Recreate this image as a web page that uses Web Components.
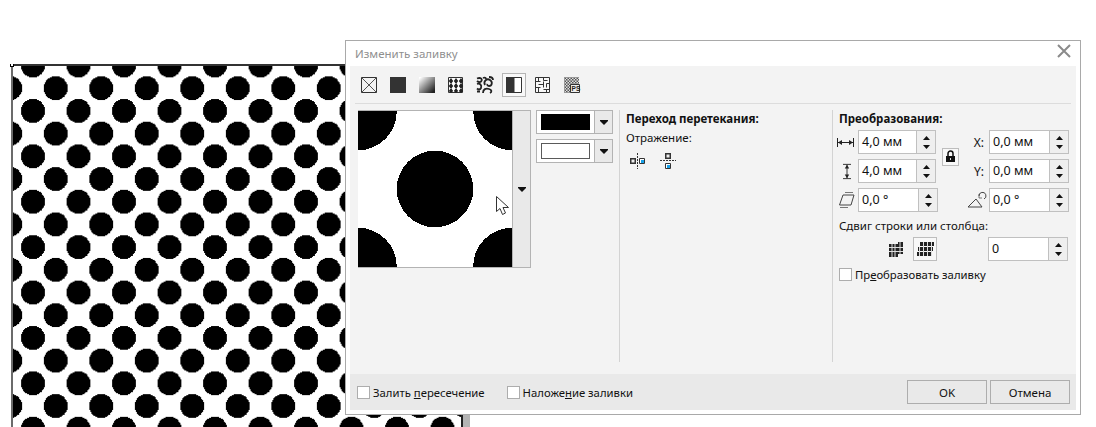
<!DOCTYPE html>
<html><head><meta charset="utf-8">
<style>
html,body{margin:0;padding:0;background:#fff;width:1096px;height:427px;overflow:hidden;font-family:"Noto Sans","Open Sans",sans-serif}
</style></head><body>
<design-canvas></design-canvas>
<fill-dialog></fill-dialog>
<template id="t-dialog">
<style>
:host{position:absolute;left:345px;top:40px;width:736px;height:375px;box-sizing:border-box;border:1px solid #a9a9a9;background:#fff;display:flex;flex-direction:column;padding:0 4px 4px;font:12px "Noto Sans","Open Sans",sans-serif;color:#111}
.title{height:25px;flex:none;display:flex;align-items:center;justify-content:space-between;color:#8f8f8f;padding:0 5px 0 5px;font-size:11.5px}
.close{width:14px;height:14px;margin:-5px 0 0 0}
.body{flex:1;background:#f3f3f3;display:flex;flex-direction:column;min-height:0}
.tools{flex:none;height:30px;margin:0 5px;border-bottom:1px solid #dcdcdc;display:flex;align-items:flex-start;padding:7px 0 0 2px;box-sizing:content-box}
.main{flex:1;display:flex;padding:6px 0 12px 8px;min-height:0}
.c1{width:255px;flex:none;display:flex;gap:5px;align-items:flex-start}
.swatches{display:flex;flex-direction:column;gap:5px}
.c2{width:213px;flex:none;box-sizing:border-box;border-left:1px solid #d3d3d3;margin-left:6px;padding:0 0 0 6px}
.c3{flex:1;border-left:1px solid #d3d3d3;padding:0 0 0 6px}
h3{margin:1px 0 4px;font-size:11.5px;line-height:15px;font-weight:700;color:#111}
.t{line-height:15px;font-size:11.5px;display:block}
.mirror{display:flex;gap:12px;margin-top:7px;padding-left:3px}
.grid{display:grid;grid-template-columns:19px 80px 21px 30px 80px;grid-template-rows:repeat(3,24px);gap:5px 0;align-items:center;margin-top:0}
.lock{grid-column:3;grid-row:1 / span 2;justify-self:end;width:17px;height:18px;box-sizing:border-box;border:1px solid #bdbdbd;background:#f8f8f8;display:flex;align-items:center;justify-content:center}
.lab{font-size:12px;text-align:right;padding-right:5px}
.shift{margin:6px 0 4px;font-size:11.5px;line-height:15px}
.sr{display:flex;height:24px;align-items:center}
.b2{width:24px;height:24px;box-sizing:border-box;border:1px solid #bdbdbd;background:#f8f8f8;display:flex;align-items:center;justify-content:center}
.bot{flex:none;height:36px;background:#e9e9e9;display:flex;align-items:center;padding:0 6px 0 7px}
.bot check-box:nth-child(2){margin-left:22px}
.sp{flex:1}
.btns{display:flex;gap:3px}
u{text-underline-offset:1px}
</style>
<div class="title"><span>Изменить заливку</span>
<svg class="close" viewBox="0 0 14 14"><path d="M1 1 13 13M13 1 1 13" stroke="#8a8a8a" stroke-width="2" fill="none"/></svg></div>
<div class="body">
<div class="tools">
<fill-icon name="none"></fill-icon><fill-icon name="solid"></fill-icon><fill-icon name="grad"></fill-icon><fill-icon name="vector"></fill-icon><fill-icon name="bitmap"></fill-icon><fill-icon name="two" active></fill-icon><fill-icon name="tex"></fill-icon><fill-icon name="ps"></fill-icon>
</div>
<div class="main">
<div class="c1"><pattern-preview></pattern-preview>
<div class="swatches"><color-pick color="#000" edge="#000"></color-pick><color-pick color="#fff" edge="#5a5a5a"></color-pick></div></div>
<div class="c2"><h3>Переход перетекания:</h3><span class="t">Отражение:</span>
<div class="mirror"><mirror-icon></mirror-icon><mirror-icon vertical></mirror-icon></div></div>
<div class="c3"><h3>Преобразования:</h3>
<div class="grid">
<svg style="margin-left:-2px" width="17" height="9" viewBox="0 0 17 9"><path d="M.5 0v9M16.5 0v9M1 4.500h15" stroke="#222" fill="none"/><path d="M1 4.500 5 2v5zM16 4.500 12 2v5z" fill="#222"/></svg>
<spin-box value="4,0 мм"></spin-box>
<span class="lock"><svg width="11" height="13" viewBox="0 0 11 13"><path d="M3 6V3.500a2.500 2.500 0 0 1 5 0V6" fill="none" stroke="#111" stroke-width="1.500"/><path d="M1 6h9v6H1z" fill="#111"/><path d="M5 8h1v2H5z" fill="#ddd"/></svg></span>
<span class="lab">X:</span><spin-box value="0,0 мм" wide></spin-box>
<svg style="margin-left:4px" width="8" height="17" viewBox="0 0 9 17"><path d="M0 .5h9M0 16.500h9M4.500 1v15" stroke="#222" fill="none"/><path d="M4.500 1 2 5h5zM4.500 16 2 12h5z" fill="#222"/></svg>
<spin-box value="4,0 мм"></spin-box>
<span class="lab" style="grid-column:4">Y:</span><spin-box value="0,0 мм" wide></spin-box>
<svg style="margin-left:-1px" width="17" height="18" viewBox="0 0 17 18"><path d="M5 4h11l-3 10H1.500z" fill="none" stroke="#444"/><path d="M7 1.500h8M2 16.500h8" stroke="#777" fill="none"/></svg>
<spin-box value="0,0 °" wide></spin-box>
<span style="grid-column:4;justify-self:end;display:flex"><svg width="22" height="18" viewBox="0 0 22 18"><path d="M1 16h14L9 8z" fill="none" stroke="#444"/><path d="M12 5a3.500 3.500 0 1 1 5 3" fill="none" stroke="#444"/><path d="M12 3v4h3" fill="none" stroke="#444" stroke-width=".7"/></svg></span>
<spin-box value="0,0 °" wide></spin-box>
</div>
<div class="shift">Сдвиг строки или столбца:</div>
<div class="sr"><span style="width:50px"></span>
<svg width="14" height="15" viewBox="0 0 14 15"><path fill="#222" d="M0 2h9v13H0zM9 0h5v12H9z"/><path stroke="#ddd" d="M3 2v13M6 2v13M11 0v12M0 5.500h14M0 9.500h14" fill="none"/></svg>
<span style="width:10px"></span>
<span class="b2"><svg width="17" height="14" viewBox="0 0 17 14"><path fill="#222" d="M3 0h14v4H3zM1 5h15v4H1zM0 10h14v4H0z"/><path stroke="#ddd" d="M6.500 0v14M10.500 0v14M14.500 0v14M2.500 5v9" fill="none"/></svg></span>
<span style="width:51px"></span><spin-box value="0" wide></spin-box></div>
<check-box style="margin-top:6px;margin-left:0">Пр<u>е</u>образовать заливку</check-box>
</div>
</div>
<div class="bot"><check-box>Залить <u>п</u>ересечение</check-box><check-box>Наложе<u>н</u>ие заливки</check-box><span class="sp"></span>
<div class="btns"><push-button>OK</push-button><push-button>Отмена</push-button></div></div>
</div>
</template>
<script>
function tpl(css,html){return `<style>${css}</style>${html}`}
class DesignCanvas extends HTMLElement{constructor(){super();const s=this.attachShadow({mode:'open'});
s.innerHTML=tpl(`:host{position:absolute;left:10px;top:64px;width:460px;height:363px;display:block}
svg{display:block;shape-rendering:crispEdges}`,
`<svg width="460" height="363" viewBox="0 0 460 363">
<defs><pattern id="p" x="23" y="1.500" width="45.500" height="45.400" patternUnits="userSpaceOnUse">
<circle cx="0" cy="0" r="12" fill="#000"/><circle cx="45.500" cy="0" r="12" fill="#000"/><circle cx="0" cy="45.400" r="12" fill="#000"/><circle cx="45.500" cy="45.400" r="12" fill="#000"/><circle cx="22.750" cy="22.700" r="12" fill="#000"/></pattern></defs>
<rect x="2" y="1" width="450" height="362" fill="#fff"/><rect x="2" y="1" width="450" height="362" fill="url(#p)"/>
<path d="M1.500 0V363" stroke="#6b6b6b" stroke-width="2" fill="none"/><path d="M1 1H452" stroke="#333" stroke-width="2"/>
<path d="M451.500 1V363" stroke="#222" stroke-width="2"/><path d="M453 8h8v355h-8z" fill="#b4b4b4"/>
<rect x="0.500" y="-0.500" width="3" height="3" fill="#fff" stroke="#000"/></svg>`)}}
customElements.define('design-canvas',DesignCanvas);
class FillDialog extends HTMLElement{constructor(){super();this.attachShadow({mode:'open'}).appendChild(document.getElementById('t-dialog').content.cloneNode(true))}}
customElements.define('fill-dialog',FillDialog);
const maze='M1.500 1.500h14v15h-14zM4.500 1.500v4M1.500 5.500h5M9.500 1.500v3h4M4.500 8.500h5M9.500 5.500v6M1.500 11.500h5M4.500 11.500v5M12.500 7.500h3M12.500 7.500v4M9.500 13.500h6M12.500 13.500v3';
const ICONS={
none:'<path d="M1.500 1.500h15v15h-15z" fill="#f3f3f3" stroke="#333"/><path d="M1.500 1.500l15 15M16.500 1.500l-15 15" stroke="#555" fill="none"/>',
solid:'<path d="M1 1h16v16H1z" fill="#333"/>',
grad:'<defs><linearGradient id="g" x1="0" y1="0" x2="1" y2="1"><stop offset=".05" stop-color="#fff"/><stop offset=".9" stop-color="#222"/></linearGradient></defs><path d="M1 1h16v16H1z" fill="url(#g)"/>',
vector:'<path d="M1.500 1.500h14v15h-14z" fill="#fff" stroke="#333"/><g fill="#222"><path d="M4 2 6.200 5 4 8 1.800 5zM9 2 11.200 5 9 8 6.800 5zM14 2 16.200 5 14 8 11.800 5zM4 7 6.200 10 4 13 1.800 10zM9 7 11.200 10 9 13 6.800 10zM14 7 16.200 10 14 13 11.800 10zM4 12 6.200 15 4 17 1.800 15zM9 12 11.200 15 9 17 6.800 15zM14 12 16.200 15 14 17 11.800 15z"/></g>',
bitmap:'<path d="M1 1h16v16H1z" fill="#f3f3f3"/><g fill="none" stroke="#222" stroke-width="1.800"><path d="M1 2.500c4-1.500 6 1 4 3-1 1-3 .5-4-.5M9 9c-2-4 2-7 5-5s2 6-1 6c-1.500 0-2-1-1.500-2"/><path d="M1 8c3-1 5 1 4 4-1 2-3 1.500-4 .5M7 17c0-4 3-5 6-4s3 3 1 4M1 15.500h3"/><path d="M13 1c2 0 4 1 4 3M7 2c2-1 3 0 3 1"/></g>',
two:'<path d="M1 1h8v16H1z" fill="#333"/><path d="M9 1.500h7.500v15H9z" fill="#fff" stroke="#333"/>',
tex:'<path d="M1 1h15v16H1z" fill="#f8f8f8"/><path d="'+maze+'" fill="none" stroke="#333"/>',
ps:'<defs><pattern id="n" width="3" height="3" patternUnits="userSpaceOnUse"><path d="M0 0h3v3H0z" fill="#ddd"/><path d="M0 0h1.500v1.500H0zM1.500 1.500H3V3H1.500z" fill="#555"/></pattern></defs><path d="M1 1h15v16H1z" fill="url(#n)"/><path d="M7.500 8.500h9v8h-9z" fill="#eee" stroke="#333"/><text x="8.600" y="15.200" font-size="6.500" font-weight="700" font-family="Liberation Sans" fill="#222">PS</text>'};
class FillIcon extends HTMLElement{constructor(){super();this.attachShadow({mode:'open'})}
connectedCallback(){const a=this.hasAttribute('active');
this.shadowRoot.innerHTML=tpl(`:host{display:flex;flex:none;width:24px;height:24px;margin-right:5px;box-sizing:border-box;align-items:center;justify-content:center;${a?'border:1px solid #b5b5b5;background:#f8f8f8':''}}svg{display:block}`,`<svg width="18" height="18" viewBox="0 0 18 18">${ICONS[this.getAttribute('name')]}</svg>`)}}
customElements.define('fill-icon',FillIcon);
const ARW=`<svg width="8" height="5" viewBox="0 0 8 5"><path d="M0 0h8v1L4 5 0 1z" fill="#111"/></svg>`;
class PatternPreview extends HTMLElement{constructor(){super();this.attachShadow({mode:'open'}).innerHTML=tpl(`:host{display:flex;width:173px;height:158px;box-sizing:border-box;border:1px solid #b3b3b3;border-left:0;background:#fff;position:relative;flex:none}
.img{flex:1;display:block;shape-rendering:crispEdges}
.s{width:18px;flex:none;background:#e9e9e9;border-left:1px solid #b3b3b3;display:flex;align-items:center;justify-content:center;box-sizing:border-box}
.cur{position:absolute;left:138px;top:85px}`,
`<svg class="img" width="155" height="156" viewBox="0 0 155 156"><rect width="155" height="156" fill="#fff"/><g fill="#000"><circle cx="77.500" cy="78" r="38.500"/><circle cx="0" cy="0" r="39"/><circle cx="155" cy="0" r="39"/><circle cx="0" cy="156" r="39"/><circle cx="155" cy="156" r="39"/></g></svg><span class="s">${ARW}</span>
<svg class="cur" width="14" height="21" viewBox="0 0 14 21"><path d="M.5.500V15.500L4 12.500l2.500 6 3-1.500L7 11.500h5.500z" fill="#fff" stroke="#333" stroke-width="1"/></svg>`)}}
customElements.define('pattern-preview',PatternPreview);
class ColorPick extends HTMLElement{constructor(){super();this.attachShadow({mode:'open'})}
connectedCallback(){const c=this.getAttribute('color'),e=this.getAttribute('edge');
this.shadowRoot.innerHTML=tpl(`:host{display:flex;width:77px;height:24px;box-sizing:border-box;border:1px solid #b3b3b3;background:#fff;flex:none}
.a{flex:1;display:flex;padding:3px 4px}.w{flex:1;background:${c};border:1px solid ${e}}
.b{width:18px;flex:none;box-sizing:border-box;background:#e9e9e9;border-left:1px solid #b3b3b3;display:flex;align-items:center;justify-content:center}`,`<div class="a"><div class="w"></div></div><div class="b">${ARW}</div>`)}}
customElements.define('color-pick',ColorPick);
class MirrorIcon extends HTMLElement{constructor(){super();this.attachShadow({mode:'open'})}
connectedCallback(){const v=this.hasAttribute('vertical');
const cell=(x,y,c,d)=>`<rect x="${x}" y="${y}" width="6" height="6" fill="${c}"/><rect x="${x+1.5}" y="${y+1.5}" width="3" height="3" fill="${d}"/>`;
const body=v?`<path d="M1 8.500h16" stroke="#333" stroke-dasharray="2 1" fill="none"/>${cell(6,1,'#333','#eee')}<path d="M6.500 11.500h5v5h-5z" fill="#fff" stroke="#333"/><rect x="8" y="13" width="3" height="3" fill="#18a0e6"/>`
:`<path d="M8.500 1v16" stroke="#333" stroke-dasharray="2 1" fill="none"/>${cell(1,6,'#333','#eee')}<path d="M10.500 6.500h5v5h-5z" fill="#fff" stroke="#333"/><rect x="12" y="8" width="3" height="3" fill="#18a0e6"/>`;
this.shadowRoot.innerHTML=tpl(`:host{display:block;width:18px;height:18px;flex:none}svg{display:block}`,`<svg width="18" height="18" viewBox="0 0 18 18">${body}</svg>`)}}
customElements.define('mirror-icon',MirrorIcon);
class SpinBox extends HTMLElement{constructor(){super();this.attachShadow({mode:'open'})}
connectedCallback(){const w=this.hasAttribute('wide');
this.shadowRoot.innerHTML=tpl(`:host{display:flex;width:${w?80:78}px;height:24px;box-sizing:border-box;border:1px solid #c0c0c0;background:#fff;font:12.5px "Noto Sans","Open Sans",sans-serif;color:#111;flex:none}
.v{flex:1;padding-left:3px;line-height:21px}
.b{width:19px;flex:none;box-sizing:border-box;background:#efefef;border-left:1px solid #c0c0c0;display:flex;flex-direction:column;align-items:center;justify-content:space-between;padding:5px 0 4px}`,
`<span class="v">${this.getAttribute('value')}</span><span class="b"><svg width="7" height="4" viewBox="0 0 7 4"><path d="M3.500 0 7 4H0z" fill="#111"/></svg><svg width="7" height="4" viewBox="0 0 7 4"><path d="M0 0h7L3.500 4z" fill="#111"/></svg></span>`)}}
customElements.define('spin-box',SpinBox);
class CheckBox extends HTMLElement{constructor(){super();this.attachShadow({mode:'open'}).innerHTML=tpl(`:host{display:flex;align-items:center;gap:3px;font-size:11.3px;line-height:15px;color:#111}
i{display:block;width:13px;height:13px;box-sizing:border-box;border:1px solid #adadad;background:#fff;flex:none}`,`<i></i><span><slot></slot></span>`)}}
customElements.define('check-box',CheckBox);
class PushButton extends HTMLElement{constructor(){super();this.attachShadow({mode:'open'}).innerHTML=tpl(`:host{display:flex;width:80px;height:24px;box-sizing:border-box;border:1px solid #adadad;background:#e9e9e9;align-items:center;justify-content:center;font-size:11.5px;color:#111}`,`<slot></slot>`)}}
customElements.define('push-button',PushButton);
</script>
</body></html>
